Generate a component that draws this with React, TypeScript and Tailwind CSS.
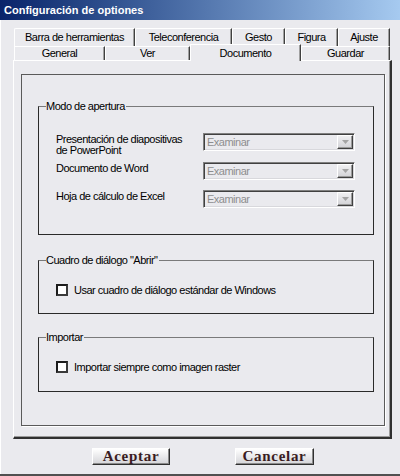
import React from "react";

const row1 = [
  { label: "Barra de herramientas", w: "w-[121px]" },
  { label: "Teleconferencia", w: "w-[97px]" },
  { label: "Gesto", w: "w-[53px]" },
  { label: "Figura", w: "w-[53px]" },
  { label: "Ajuste", w: "w-[52px]" },
];

const row2 = [
  { label: "General", w: "w-[91px]" },
  { label: "Ver", w: "w-[85px]" },
  { label: "Documento", w: "w-[111px]", active: true },
  { label: "Guardar", w: "w-[89px]" },
];

const openers = [
  { label: "Presentación de diapositivas de PowerPoint", mt: "mt-0" },
  { label: "Documento de Word", mt: "mt-[11px]" },
  { label: "Hoja de cálculo de Excel", mt: "mt-[10px]" },
];

const Select = () => (
  <div className="w-[152px] h-[18px] flex items-stretch border border-t-[#808080] border-l-[#808080] border-b-white border-r-white shadow-[inset_1px_1px_0_#404040,inset_-1px_-1px_0_#d8d8dc] p-[1px]">
    <span className="flex-1 pl-[2px] leading-[14px] text-[#8e8e8e]">Examinar</span>
    <span className="w-[16px] flex items-center justify-center bg-gradient-to-b from-[#f0f0f2] to-[#d2d2d6] border border-t-white border-l-white border-b-[#404040] border-r-[#404040] shadow-[inset_-1px_-1px_0_#9a9a9a]">
      <svg width="7" height="4" viewBox="0 0 7 4">
        <path d="M0 0h7L3.5 4z" fill="#a4a4a4" />
      </svg>
    </span>
  </div>
);

const Check = ({ label }: { label: string }) => (
  <div className="flex items-center h-[12px]">
    <span className="w-[12px] h-[12px] bg-white border-2 border-[#1c1c1c] border-b-[#3a3a3a] border-r-[#3a3a3a]" />
    <span className="ml-[6px] leading-[12px]">{label}</span>
  </div>
);

const Group = ({
  title,
  className,
  children,
}: {
  title: string;
  className: string;
  children: React.ReactNode;
}) => (
  <fieldset
    className={`w-[336px] border border-[#2a2a2a] border-t-[#7a7a7a] pl-[17px] ${className}`}
  >
    <legend className="-ml-[10px] leading-[13px] pr-[1px]">{title}</legend>
    {children}
  </fieldset>
);

const Button = ({ label, w }: { label: string; w: string }) => (
  <button
    className={`${w} h-[17px] flex items-center justify-center bg-gradient-to-b from-white to-[#d4d4d8] border border-t-white border-l-white border-b-[#303030] border-r-[#303030] shadow-[inset_-1px_-1px_0_#8a8a8a] font-['Liberation_Serif','Times_New_Roman',serif] font-bold text-[15px] tracking-[0.7px] leading-none text-[#3a1c22]`}
  >
    {label}
  </button>
);

export default function App() {
  return (
    <div className="w-[400px] h-[476px] bg-[#eaeaee] flex flex-col border-b-2 border-b-[#505050] font-['Liberation_Sans',Arial,sans-serif] text-[11px] tracking-[-0.5px] text-black overflow-hidden">
      <div className="h-[20px] flex items-center pl-[4px] bg-gradient-to-r from-[#0a246a] to-[#a6caf0] text-white font-bold tracking-normal">
        Configuración de optiones
      </div>

      <div className="flex-1 flex flex-col border-l border-l-white pl-[12px] pt-[8px]">
        <div className="flex pl-[1px] h-[18px]">
          {row1.map((t) => (
            <div
              key={t.label}
              className={`${t.w} h-[18px] flex items-center justify-center border-t border-l border-white border-r border-r-[#404040] shadow-[inset_-1px_0_0_#a0a0a0] rounded-tl-[2px]`}
            >
              {t.label}
            </div>
          ))}
        </div>

        <div className="flex items-end pl-[1px] h-[16px] -mt-[2px] relative z-10">
          {row2.map((t) =>
            t.active ? (
              <div
                key={t.label}
                className={`${t.w} h-[17px] -mb-px bg-[#eaeaee] flex items-center justify-center border-t border-l border-white border-r border-r-[#404040] shadow-[inset_-1px_0_0_#a0a0a0]`}
              >
                {t.label}
              </div>
            ) : (
              <div
                key={t.label}
                className={`${t.w} h-[14px] bg-[#eaeaee] flex items-center justify-center border-t border-l border-white border-r border-r-[#404040] shadow-[inset_-1px_0_0_#a0a0a0]`}
              >
                {t.label}
              </div>
            )
          )}
        </div>

        <div className="w-[379px] h-[379px] border-t border-l border-white border-r-2 border-b-2 border-r-[#303030] border-b-[#303030] shadow-[inset_-1px_-1px_0_#9a9a9a] pl-[7px] pt-[13px]">
          <div className="w-[364px] h-[352px] border border-[#5a5a5a] shadow-[1px_1px_0_#ffffff] pl-[16px]">
            <Group title="Modo de apertura" className="mt-[25px] pt-[20px] pb-[26px]">
              <div className="flex flex-col">
                {openers.map((o) => (
                  <div key={o.label} className={`flex h-[18px] ${o.mt}`}>
                    <span className="w-[147px] pr-[20px] leading-[11px] pt-[1px]">{o.label}</span>
                    <Select />
                  </div>
                ))}
              </div>
            </Group>

            <Group title={'Cuadro de diálogo "Abrir"'} className="mt-[19px] pt-[17px] pb-[17px]">
              <Check label="Usar cuadro de diálogo estándar de Windows" />
            </Group>

            <Group title="Importar" className="mt-[17px] pt-[17px] pb-[18px]">
              <Check label="Importar siempre como imagen raster" />
            </Group>
          </div>
        </div>

        <div className="flex mt-[9px] pl-[79px] gap-[65px]">
          <Button label="Aceptar" w="w-[78px]" />
          <Button label="Cancelar" w="w-[79px]" />
        </div>
      </div>
    </div>
  );
}
